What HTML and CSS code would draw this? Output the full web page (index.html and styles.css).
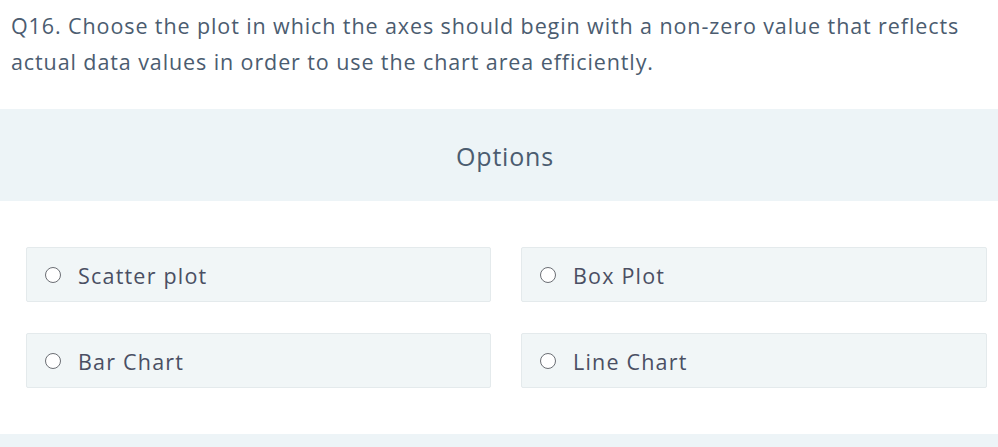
FILE: index.html
```html
<!DOCTYPE html>
<html>
<head>
<meta charset="utf-8">
<link rel="stylesheet" href="styles.css">
</head>
<body>
<div class="question">Q16. Choose the plot in which the axes should begin with a non-zero value that reflects actual data values in order to use the chart area efficiently.</div>
<div class="options-head">Options</div>
<div class="options">
  <label class="opt"><span class="radio"></span><span class="label">Scatter plot</span></label>
  <label class="opt"><span class="radio"></span><span class="label">Box Plot</span></label>
  <label class="opt"><span class="radio"></span><span class="label">Bar Chart</span></label>
  <label class="opt"><span class="radio"></span><span class="label">Line Chart</span></label>
</div>
<div class="footer-band"></div>
</body>
</html>
```
FILE: styles.css
```css
html, body {
  margin: 0;
  padding: 0;
  background: #ffffff;
}
body {
  font-family: "Open Sans", "Noto Sans", sans-serif;
  width: 998px;
  height: 447px;
  overflow: hidden;
}
.question {
  padding: 8px 20px 0 11px;
  font-size: 21.5px;
  letter-spacing: 0.9px;
  line-height: 36px;
  color: #4b5c70;
  height: 109px;
  box-sizing: border-box;
}
.options-head {
  height: 92px;
  background: #edf4f7;
  display: flex;
  align-items: center;
  justify-content: center;
  font-size: 25px;
  letter-spacing: 0.8px;
  color: #4b5c70;
  padding-left: 12px;
  padding-top: 2px;
  box-sizing: border-box;
}
.options {
  display: grid;
  grid-template-columns: 465px 466px;
  grid-auto-rows: 55px;
  align-content: start;
  column-gap: 30px;
  row-gap: 31px;
  padding: 46px 11px 0 26px;
  height: 233px;
  box-sizing: border-box;
}
.opt {
  box-sizing: border-box;
  background: #f1f6f7;
  border: 1px solid #e4eaec;
  border-radius: 2px;
  display: flex;
  align-items: center;
  padding-left: 18px;
  padding-top: 1px;
}
.radio {
  width: 14px;
  height: 14px;
  border: 1.5px solid #6b6e74;
  border-radius: 50%;
  background: #fff;
  flex: none;
}
.label {
  margin-left: 17px;
  font-size: 21.5px;
  letter-spacing: 1.2px;
  color: #4a4f63;
}
.footer-band {
  height: 14px;
  background: #edf4f7;
}
```
